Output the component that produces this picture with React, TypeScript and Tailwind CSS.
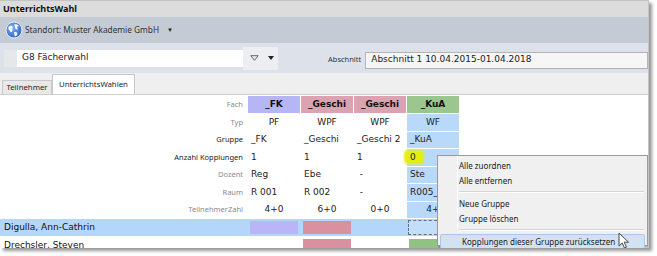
import React from "react";

type Col = {
  head: string;
  headBg: string;
  cellBg: string;
  typ: string;
  gruppe: string;
  anzahl: string;
  dozent: string;
  raum: string;
  tn: string;
};

const cols: Col[] = [
  { head: "_FK", headBg: "bg-[#b6b6f7]", cellBg: "bg-white", typ: "PF", gruppe: "_FK", anzahl: "1", dozent: "Reg", raum: "R 001", tn: "4+0" },
  { head: "_Geschi", headBg: "bg-[#dba3b2]", cellBg: "bg-white", typ: "WPF", gruppe: "_Geschi", anzahl: "1", dozent: "Ebe", raum: "R 002", tn: "6+0" },
  { head: "_Geschi", headBg: "bg-[#dba3b2]", cellBg: "bg-white", typ: "WPF", gruppe: "_Geschi 2", anzahl: "1", dozent: "\u00a0-", raum: "\u00a0-", tn: "0+0" },
  { head: "_KuA", headBg: "bg-[#9bc78e]", cellBg: "bg-[#b9d9fb]", typ: "WF", gruppe: "_KuA", anzahl: "0", dozent: "Ste", raum: "R005_", tn: "4+" },
];

const dv = "font-['DejaVu_Sans',Verdana,sans-serif]";
const ui = "font-['Noto_Sans','Open_Sans',sans-serif]";

function Label({ text, dark }: { text: string; dark?: boolean }) {
  return (
    <div className={`w-[247px] shrink-0 flex items-center justify-end pr-[4px] text-[7.5px] ${ui} ${dark ? "text-[#1a1a1a]" : "text-[#8a8a8a]"}`}>
      {text}
    </div>
  );
}

function DataRow({ label, dark, field, center }: { label: string; dark?: boolean; field: keyof Col; center?: boolean }) {
  return (
    <div className="flex h-[16.5px] mt-px">
      <Label text={label} dark={dark} />
      {cols.map((c, i) => (
        <div
          key={i}
          className={`relative w-[52px] ml-px shrink-0 flex items-center text-[9px] text-[#222] ${dv} ${c.cellBg} ${center ? "justify-center" : "pl-[3px]"}`}
        >
          {field === "anzahl" && i === 3 && (
            <span className="absolute left-[-3px] top-[1px] w-[20px] h-[14px] bg-[#e4ef10] blur-[1px] rounded-sm" />
          )}
          <span className="relative">{c[field]}</span>
        </div>
      ))}
    </div>
  );
}

function Globe() {
  return (
    <svg width="18" height="18" viewBox="0 0 18 18">
      <defs>
        <radialGradient id="g" cx="40%" cy="35%" r="70%">
          <stop offset="0" stopColor="#7fb2f0" />
          <stop offset="1" stopColor="#2a62c8" />
        </radialGradient>
      </defs>
      <circle cx="9" cy="9" r="8" fill="url(#g)" stroke="#e8eef8" strokeWidth="1" />
      <path d="M4 5.5c1.5-1 3-.8 3.6.4.5 1-.6 1.6-.2 2.8.4 1.1-.5 2.3-1.4 2.4-.9.1-1-1.4-1.8-2-.8-.6-1.2-2.7-.2-3.6z" fill="#fff" />
      <path d="M10 3.2c1.4-.2 3.2.6 4.3 2-.8.3-1.8-.2-2.2.6-.4.9.9 1.5.4 2.4-.5.7-1.6.2-2.1-.6-.5-.9-.2-2.1-.8-2.8-.4-.6-.2-1.5.4-1.6z" fill="#fff" />
      <path d="M9.5 11.2c1-.4 2.4.1 2.8 1.1.3 1-.6 2.5-1.8 3-.8.2-.9-.9-1.1-1.9-.2-1-.7-1.8.1-2.2z" fill="#fff" />
    </svg>
  );
}

function Cursor() {
  return (
    <svg width="12" height="17" viewBox="0 0 12 17">
      <path d="M1 1v13l3.2-3 2.3 5 2-.9-2.3-4.9H10.5z" fill="#fff" stroke="#333" strokeWidth="0.9" strokeLinejoin="round" />
    </svg>
  );
}

function MenuItem({ text, active }: { text: string; active?: boolean }) {
  return (
    <div
      className={`h-[15px] flex items-center pl-[21px] text-[8px] text-[#1a1a1a] ${ui} ${
        active ? "mx-[2px] pl-[19px] bg-[#d3e2f3] border border-[#a9c7e6] rounded-[2px]" : ""
      }`}
    >
      {text}
    </div>
  );
}

export default function App() {
  return (
    <div className="w-[657px] h-[256px] bg-white overflow-hidden">
      <div className="relative w-[649px] h-[248px] border-t border-r border-[#c4c4c4] shadow-[3px_3px_3px_rgba(0,0,0,0.4)] bg-white overflow-hidden">
        {/* title */}
        <div className={`h-[16px] bg-[#dcdcdc] flex items-center pl-[3px] text-[9px] font-bold text-[#111] ${ui}`}>
          UnterrichtsWahl
        </div>
        {/* standort */}
        <div className={`h-[26px] bg-[#c5cbd5] flex items-center pl-[5px] text-[8.3px] text-[#333] ${ui}`}>
          <Globe />
          <span className="ml-[2px]">Standort: Muster Akademie GmbH</span>
          <span className="ml-[8px] text-[6px] text-[#222]">▼</span>
        </div>
        {/* filter */}
        <div className="h-[30px] bg-[#dde2ea] flex items-center pl-[4px]">
          <div className="w-[13px] h-[17px] bg-[#e6e7e9]" />
          <div className={`w-[226px] h-[17px] bg-white flex items-center pl-[5px] text-[9px] text-[#222] ${dv}`}>G8 Fächerwahl</div>
          <div className="w-[35px] h-[23px] bg-[#eceef1] flex items-center pl-[7px] gap-[9px]">
            <svg width="9" height="6" viewBox="0 0 9 6">
              <path d="M.8.7h7.4L4.5 5.3z" fill="none" stroke="#555" strokeWidth="0.9" />
            </svg>
            <svg width="6" height="4" viewBox="0 0 6 4">
              <path d="M0 0h6L3 4z" fill="#222" />
            </svg>
          </div>
          <span className={`ml-[50px] mt-[4px] text-[7.5px] text-[#333] ${ui}`}>Abschnitt</span>
          <div className={`ml-[4px] mt-[4px] flex-1 h-[17px] bg-[#f6f6f6] border border-[#b4b4b4] flex items-center pl-[5px] text-[9px] text-[#222] ${dv}`}>
            Abschnitt 1 10.04.2015-01.04.2018
          </div>
        </div>
        {/* tabs */}
        <div className={`h-[21px] bg-[#efefef] flex items-end pl-[2px] text-[7.8px] text-[#222] ${ui}`}>
          <div className="h-[14px] w-[50px] bg-[#e8e8e8] border border-b-0 border-[#c8c8c8] flex items-center justify-center">Teilnehmer</div>
          <div className="h-[20px] w-[83px] bg-white border border-b-0 border-[#c8c8c8] flex items-center justify-center">UnterrichtsWahlen</div>
        </div>
        {/* content */}
        <div className="border-t border-[#cfcfcf] pt-px">
          <div className="flex h-[17px]">
            <Label text="Fach" />
            {cols.map((c, i) => (
              <div key={i} className={`w-[52px] ml-px shrink-0 flex items-center justify-center text-[9px] font-bold text-[#111] ${dv} ${c.headBg}`}>
                {c.head}
              </div>
            ))}
          </div>
          <DataRow label="Typ" field="typ" center />
          <DataRow label="Gruppe" field="gruppe" dark />
          <DataRow label="Anzahl Kopplungen" field="anzahl" dark />
          <DataRow label="Dozent" field="dozent" />
          <DataRow label="Raum" field="raum" />
          <DataRow label="TeilnehmerZahl" field="tn" center />
          {/* Digulla */}
          <div className="flex h-[17px] mt-px bg-[#b4d6fa]">
            <div className={`w-[247px] shrink-0 flex items-center pl-[4px] text-[9px] text-[#111] ${dv}`}>Digulla, Ann-Cathrin</div>
            <div className="w-[52px] ml-px shrink-0 p-[2px]"><div className="h-full bg-[#b9b5f8]" /></div>
            <div className="w-[52px] ml-px shrink-0 p-[2px]"><div className="h-full bg-[#d9909f]" /></div>
            <div className="w-[52px] ml-px shrink-0" />
            <div className="w-[52px] ml-px shrink-0 p-px"><div className="h-full border border-dashed border-[#5f6f86] bg-[#c3def9]" /></div>
          </div>
          {/* Drechsler */}
          <div className="flex h-[17px] mt-px">
            <div className={`w-[247px] shrink-0 flex items-center pl-[4px] text-[9px] text-[#111] ${dv}`}>Drechsler, Steven</div>
            <div className="w-[52px] ml-px shrink-0" />
            <div className="w-[52px] ml-px shrink-0 p-[2px]"><div className="h-full bg-[#d9909f]" /></div>
            <div className="w-[52px] ml-px shrink-0" />
            <div className="w-[52px] ml-px shrink-0 p-[2px]"><div className="h-full bg-[#90c283]" /></div>
          </div>
        </div>

        {/* context menu */}
        <div className="absolute left-[437px] top-[154px] w-[211px] h-[91px] bg-[#f0f0f0] border border-[#9a9a9a] shadow-[2px_2px_2px_rgba(0,0,0,0.35)] pt-[2px]">
          <div className="absolute left-[19px] top-0 bottom-[17px] w-px bg-[#dadada] border-r border-white" />
          <MenuItem text="Alle zuordnen" />
          <MenuItem text="Alle entfernen" />
          <div className="ml-[21px] mr-[3px] my-[3px] h-px bg-[#d6d6d6] border-b border-white box-content" />
          <MenuItem text="Neue Gruppe" />
          <MenuItem text="Gruppe löschen" />
          <div className="ml-[21px] mr-[3px] my-[3px] h-px bg-[#d6d6d6] border-b border-white box-content" />
          <MenuItem text="Kopplungen dieser Gruppe zurücksetzen" active />
          <div className="absolute left-[180px] top-[76px]">
            <Cursor />
          </div>
        </div>
      </div>
    </div>
  );
}
